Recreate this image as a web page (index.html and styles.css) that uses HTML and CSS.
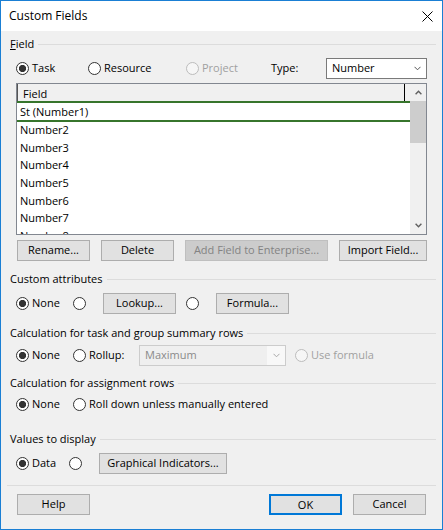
FILE: index.html
```html
<!DOCTYPE html>
<html>
<head>
<meta charset="utf-8">
<title>Custom Fields</title>
<link rel="stylesheet" href="styles.css">
</head>
<body>
<div class="window">
  <div class="titlebar">
    <span class="title">Custom Fields</span>
    <svg class="close" width="11" height="11" viewBox="0 0 11 11"><path d="M0.5 0.5 L10.5 10.5 M10.5 0.5 L0.5 10.5" stroke="#000" stroke-width="1" fill="none"/></svg>
  </div>
  <div class="content">
    <div class="legend legend-first"><span><u>F</u>ield</span><i></i></div>
    <div class="row row-type">
      <label class="opt w72"><span class="rb on"></span><span class="t">Task</span></label>
      <label class="opt w98"><span class="rb"></span><span class="t">Resource</span></label>
      <label class="opt w85 dis"><span class="rb"></span><span class="t">Project</span></label>
      <span class="typelbl t">Type:</span>
      <div class="combo combo-type"><span class="combo-text">Number</span><span class="combo-arrow"><svg width="7" height="5" viewBox="0 0 7 5"><polyline points="0.5,0.8 3.5,3.8 6.5,0.8" fill="none" stroke="#555" stroke-width="1"/></svg></span></div>
    </div>
    <div class="list">
      <div class="list-main">
        <div class="list-head"><div class="col">Field</div></div>
        <div class="item sel">St (Number1)</div>
        <div class="item">Number2</div>
        <div class="item">Number3</div>
        <div class="item">Number4</div>
        <div class="item">Number5</div>
        <div class="item">Number6</div>
        <div class="item">Number7</div>
        <div class="item">Number8</div>
      </div>
      <div class="sb">
        <div class="sb-btn"><svg width="7" height="5" viewBox="0 0 7 5"><polyline points="0.6,4.2 3.5,1.2 6.4,4.2" fill="none" stroke="#606060" stroke-width="1.4"/></svg></div>
        <div class="sb-thumb"></div>
        <div class="sb-track"></div>
        <div class="sb-btn"><svg width="7" height="5" viewBox="0 0 7 5"><polyline points="0.6,0.8 3.5,3.8 6.4,0.8" fill="none" stroke="#606060" stroke-width="1.4"/></svg></div>
      </div>
    </div>
    <div class="btns">
      <div class="btn">Rename...</div>
      <div class="btn">Delete</div>
      <div class="btn dis w143">Add Field to Enterprise...</div>
      <div class="btn w88">Import Field...</div>
    </div>

    <div class="legend leg-custom"><span>Custom attributes</span><i></i></div>
    <div class="row row-custom">
      <label class="opt w57"><span class="rb on"></span><span class="t">None</span></label>
      <label class="opt w30"><span class="rb"></span></label>
      <div class="btn">Lookup...</div>
      <label class="opt w30 ml10"><span class="rb"></span></label>
      <div class="btn">Formula...</div>
    </div>

    <div class="legend leg-task"><span>Calculation for task and group summary rows</span><i></i></div>
    <div class="row row-task">
      <label class="opt w57"><span class="rb on"></span><span class="t">None</span></label>
      <label class="opt w66"><span class="rb"></span><span class="t">Rollup:</span></label>
      <div class="combo combo-dis"><span class="combo-text">Maximum</span><span class="combo-arrow"><svg width="7" height="5" viewBox="0 0 7 5"><polyline points="0.5,0.8 3.5,3.8 6.5,0.8" fill="none" stroke="#a8a8a8" stroke-width="1"/></svg></span></div>
      <label class="opt dis ml9"><span class="rb"></span><span class="t">Use formula</span></label>
    </div>

    <div class="legend leg-assign"><span>Calculation for assignment rows</span><i></i></div>
    <div class="row row-assign">
      <label class="opt w57"><span class="rb on"></span><span class="t">None</span></label>
      <label class="opt"><span class="rb"></span><span class="t">Roll down unless manually entered</span></label>
    </div>

    <div class="legend leg-values"><span>Values to display</span><i></i></div>
    <div class="row row-values">
      <label class="opt w53"><span class="rb on"></span><span class="t">Data</span></label>
      <label class="opt w30"><span class="rb"></span></label>
      <div class="btn w128">Graphical Indicators...</div>
    </div>

    <div class="sep"></div>
    <div class="footer">
      <div class="btn">Help</div>
      <div class="btn ok">OK</div>
      <div class="btn cancel">Cancel</div>
    </div>
  </div>
</div>
</body>
</html>
```
FILE: styles.css
```css
* { box-sizing: border-box; }
html, body { margin: 0; padding: 0; }
body {
  width: 443px;
  height: 530px;
  background: #ffffff;
  font-family: "Open Sans", "Noto Sans", sans-serif;
  font-size: 11px;
  color: #000000;
}
.window {
  width: 443px;
  height: 530px;
  border: 1px solid #1a7fd4;
  background: #f0f0f0;
  display: flex;
  flex-direction: column;
  overflow: hidden;
}
.titlebar {
  flex: none;
  height: 30px;
  background: #ffffff;
  display: flex;
  align-items: center;
  padding-left: 8px;
}
.title { font-size: 12px; margin-bottom: 1px; }
.close { margin-left: auto; margin-right: 9px; margin-top: 1px; }
.content {
  flex: 1;
  padding: 0 6px 0 9px;
  display: flex;
  flex-direction: column;
}
.legend {
  flex: none;
  display: flex;
  align-items: center;
  height: 15px;
  line-height: 15px;
  white-space: nowrap;
}
.legend span { margin-bottom: 2px; }
.legend i {
  flex: 1;
  height: 1px;
  background: #dcdcdc;
  margin-left: 4px;
}
.legend-first { margin-top: 6px; }
.leg-custom { margin-top: 11px; }
.leg-task { margin-top: 12px; }
.leg-assign { margin-top: 10px; }
.leg-values { margin-top: 17px; }

.row {
  flex: none;
  display: flex;
  align-items: center;
  height: 21px;
  margin-left: 6px;
}
.row-type { margin-top: 6px; }
.row-custom { margin-top: 6px; }
.row-task { margin-top: 4px; }
.row-assign { margin-top: 3px; }
.row-values { margin-top: 6px; }

.opt {
  flex: none;
  display: flex;
  align-items: center;
  white-space: nowrap;
}
.t { margin-bottom: 2px; }
.rb {
  flex: none;
  width: 13px;
  height: 13px;
  border: 1px solid #333333;
  border-radius: 50%;
  background: #ffffff;
  margin-right: 3px;
}
.rb.on {
  background: radial-gradient(circle at 50% 50%, #333333 0, #333333 3.3px, #ffffff 3.9px);
}
.opt.dis { color: #a0a0a0; }
.opt.dis .rb { border-color: #bcbcbc; background: #f6f6f6; }

.w30 { width: 30px; }
.w53 { width: 53px; }
.w57 { width: 57px; }
.w66 { width: 66px; }
.w72 { width: 72px; }
.w85 { width: 85px; }
.w98 { width: 98px; }
.ml9 { margin-left: 9px; }
.ml10 { margin-left: 10px; }

.typelbl { flex: none; width: 55px; }

.combo {
  flex: none;
  height: 21px;
  display: flex;
  align-items: center;
}
.combo-type {
  width: 101px;
  background: #ffffff;
  border: 1px solid #7a7a7a;
}
.combo-text { flex: 1; padding-left: 5px; margin-bottom: 2px; }
.combo-arrow {
  flex: none;
  width: 18px;
  height: 100%;
  display: flex;
  align-items: center;
  justify-content: center;
}
.combo-dis {
  width: 147px;
  border: 1px solid #cccccc;
  background: #efefef;
  color: #8a8a8a;
}
.combo-dis .combo-arrow { background: #f8f8f8; }

.list {
  flex: none;
  margin: 4px 0 0 6px;
  width: 411px;
  height: 152px;
  border: 1px solid #828790;
  background: #ffffff;
  display: flex;
}
.list-main {
  flex: 1;
  overflow: hidden;
  display: flex;
  flex-direction: column;
}
.list-head {
  flex: none;
  height: 17px;
  background: #f0f0f0;
  display: flex;
}
.list-head .col {
  width: 388px;
  height: 17px;
  border-left: 1px solid #555555;
  border-right: 1px solid #000000;
  padding-left: 5px;
  line-height: 19px;
}
.item {
  flex: none;
  height: 17.65px;
  line-height: 16px;
  padding-left: 3px;
  white-space: nowrap;
}
.item.sel {
  height: 21px;
  line-height: 17px;
  border-top: 2px solid #37752c;
  border-bottom: 2px solid #37752c;
}
.sb {
  flex: none;
  width: 16px;
  background: #f0f0f0;
  display: flex;
  flex-direction: column;
}
.sb-btn {
  flex: none;
  height: 17px;
  display: flex;
  align-items: center;
  justify-content: center;
}
.sb-thumb { flex: none; height: 42px; background: #cdcdcd; }
.sb-track { flex: 1; }

.btns {
  flex: none;
  display: flex;
  gap: 11px;
  margin: 5px 0 0 7px;
  height: 21px;
}
.btn {
  flex: none;
  width: 73px;
  height: 21px;
  border: 1px solid #adadad;
  background: #e1e1e1;
  display: flex;
  align-items: center;
  justify-content: center;
  white-space: nowrap;
  padding-bottom: 2px;
}
.btn.dis { background: #cccccc; border-color: #bfbfbf; color: #838383; }
.w88 { width: 88px; }
.w128 { width: 128px; }
.w143 { width: 143px; }

.sep {
  flex: none;
  height: 1px;
  background: #dcdcdc;
  margin: 11px 0 0 -3px;
}
.footer {
  flex: none;
  display: flex;
  height: 21px;
  margin: 8px 10px 0 7px;
}
.btn.ok { margin-left: auto; border: 2px solid #0078d7; padding-bottom: 1px; }
.btn.cancel { margin-left: 11px; }
```
